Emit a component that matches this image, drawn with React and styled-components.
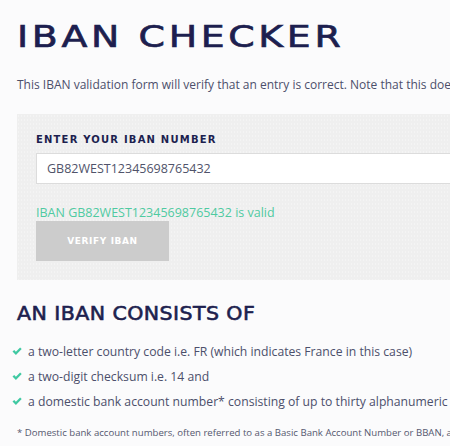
import React from 'react';
import styled, { createGlobalStyle } from 'styled-components';

const GlobalStyle = createGlobalStyle`
    html, body {
        margin: 0;
        padding: 0;
        background: #fbfbfc;
        overflow: hidden;
    }
    body {
        font-family: 'DejaVu Sans', sans-serif;
    }
`;

const Page = styled.div`
    width: 760px;
    padding: 18px 0 0 17px;
    box-sizing: border-box;
`;

// wide display face: DejaVu stretched a little to get the extended look
const Title = styled.h1`
    margin: 0;
    font-family: 'DejaVu Sans', sans-serif;
    font-weight: 400;
    font-size: 31px;
    line-height: 36px;
    letter-spacing: 3px;
    color: #1d1f4f;
    -webkit-text-stroke: 0.7px #1d1f4f;
    transform: scaleX(1.22);
    transform-origin: left center;
`;

const Intro = styled.p`
    margin: 21px 0 0;
    font-family: 'Open Sans', sans-serif;
    font-size: 12px;
    line-height: 20px;
    color: #4c4f6b;
    white-space: nowrap;
`;

const Panel = styled.form`
    margin-top: 19px;
    height: 166px;
    box-sizing: border-box;
    padding: 19px 19px 0;
    background-color: #efefef;
    background-image: radial-gradient(rgba(255, 255, 255, 0.3) 0.5px, transparent 0.7px);
    background-size: 3px 4px;
    display: flex;
    flex-direction: column;
    align-items: flex-start;
`;

const Label = styled.label`
    font-family: 'DejaVu Sans', sans-serif;
    font-weight: 700;
    font-size: 10px;
    line-height: 14px;
    letter-spacing: 1.2px;
    color: #1d1f4f;
`;

const Input = styled.input`
    margin-top: 6px;
    width: 100%;
    height: 31px;
    box-sizing: border-box;
    border: 1px solid #dcdcdc;
    background: #ffffff;
    padding: 0 10px;
    font-family: 'Open Sans', sans-serif;
    font-size: 12.5px;
    color: #50536a;
    outline: none;
`;

const Status = styled.div`
    margin-top: 21px;
    font-family: 'Open Sans', sans-serif;
    font-size: 12.5px;
    line-height: 16px;
    color: ${ props => props.valid ? '#4fcaa1' : '#e0566b' };
`;

const VerifyButton = styled.button`
    width: 133px;
    height: 40px;
    border: none;
    background: #cccccc;
    color: #ffffff;
    font-family: 'DejaVu Sans', sans-serif;
    font-weight: 700;
    font-size: 9px;
    letter-spacing: 0.6px;
    cursor: default;
`;

const SubTitle = styled.h2`
    margin: 21px 0 0;
    font-family: 'DejaVu Sans', sans-serif;
    font-weight: 400;
    font-size: 19px;
    line-height: 24px;
    letter-spacing: 0.4px;
    color: #1d1f4f;
    -webkit-text-stroke: 0.6px #1d1f4f;
    transform: scaleX(1.08);
    transform-origin: left center;
`;

const List = styled.ul`
    margin: 14px 0 0 -5px;
    padding: 0;
    list-style: none;
`;

const Item = styled.li`
    display: flex;
    align-items: center;
    gap: 6px;
    height: 25px;
    font-family: 'Open Sans', sans-serif;
    font-size: 12.2px;
    color: #4c4f6b;
    white-space: nowrap;
`;

const Footnote = styled.p`
    margin: 8px 0 0;
    font-family: 'Open Sans', sans-serif;
    font-size: 9.6px;
    line-height: 21px;
    color: #55586f;
`;

const Check = () => (
    <svg width="10" height="9" viewBox="0 0 10 9">
        <path d="M0.5 4.6 L2.2 3 L3.9 4.7 L8.1 0.5 L9.7 2.1 L3.9 7.9 Z" fill="#3fc9a2" />
    </svg>
);

const parts = [
    'a two-letter country code i.e. FR (which indicates France in this case)',
    'a two-digit checksum i.e. 14 and',
    'a domestic bank account number* consisting of up to thirty alphanumeric characters',
];

export default function App() {
    const iban = 'GB82WEST12345698765432';
    return (
        <Page>
            <GlobalStyle />
            <Title>IBAN CHECKER</Title>
            <Intro>
                This IBAN validation form will verify that an entry is correct. Note that this does not mean the account exists.
            </Intro>
            <Panel onSubmit={ e => e.preventDefault() }>
                <Label htmlFor="iban">ENTER YOUR IBAN NUMBER</Label>
                <Input id="iban" defaultValue={ iban } />
                <Status valid>IBAN { iban } is valid</Status>
                <VerifyButton type="submit">VERIFY IBAN</VerifyButton>
            </Panel>
            <SubTitle>AN IBAN CONSISTS OF</SubTitle>
            <List>
                { parts.map( ( text ) => (
                    <Item key={ text }>
                        <Check />
                        { text }
                    </Item>
                ) ) }
            </List>
            <Footnote>
                * Domestic bank account numbers, often referred to as a Basic Bank Account Number or BBAN, are defined per country
                and which are country-specific, are included within the overall IBAN number, and contain the bank and branch codes.
            </Footnote>
        </Page>
    );
}
